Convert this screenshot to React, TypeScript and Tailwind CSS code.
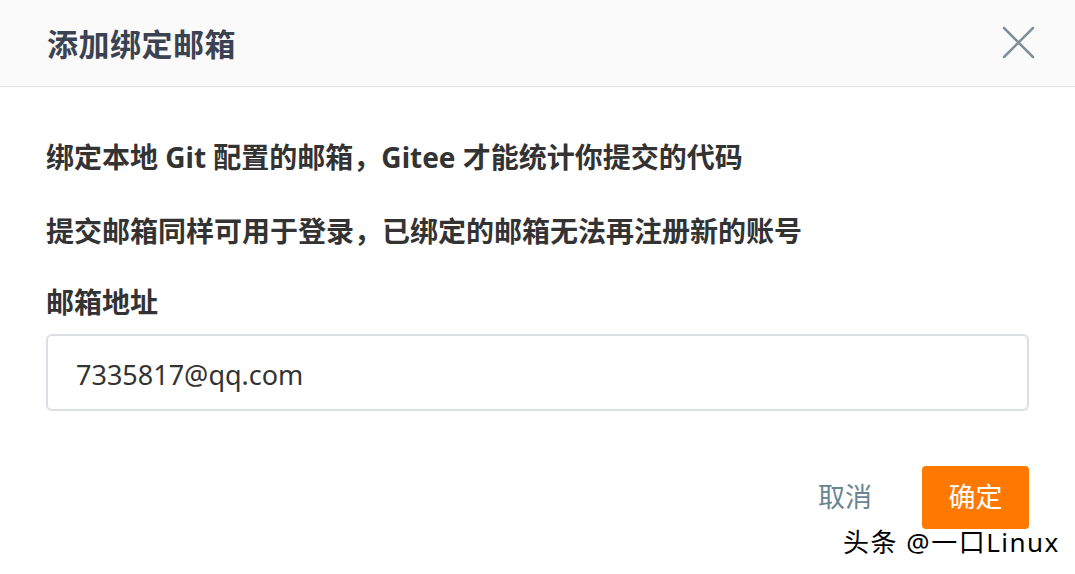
const font = { fontFamily: '"Noto Sans", "Noto Sans CJK SC", sans-serif' }

export default function App() {
  return (
    <div className="w-[1075px] h-[574px] bg-white overflow-hidden relative" style={font}>
      <div className="h-[87px] bg-[#fafafa] border-b border-[#e3e3e3] flex items-center justify-between pl-[47px] pr-[38px]">
        <h1 className="text-[31px] font-bold text-[#3b4252] leading-[40px] pt-[2px] tracking-[0.5px]">添加绑定邮箱</h1>
        <svg width="36" height="36" viewBox="0 0 36 36" className="text-[#7f9099]">
          <path d="M3 3 L32 32 M32 3 L3 32" stroke="currentColor" strokeWidth="2.5" strokeLinecap="round" />
        </svg>
      </div>

      <div className="px-[46px] pt-[52px] text-[#333333]">
        <p className="text-[28px] font-bold leading-[36px]">绑定本地 Git 配置的邮箱，Gitee 才能统计你提交的代码</p>
        <p className="text-[28px] font-bold leading-[36px] mt-[38px]">提交邮箱同样可用于登录，已绑定的邮箱无法再注册新的账号</p>
        <label className="block text-[28px] font-bold leading-[36px] mt-[35px]">邮箱地址</label>
        <div className="mt-[14px] h-[77px] border-2 border-[#dcdfe6] rounded-[6px] flex items-center pl-[28px] pt-[6px]">
          <span className="text-[27px] text-[#333333]">7335817@qq.com</span>
        </div>

        <div className="flex justify-end items-center mt-[55px] gap-[50px]">
          <button className="text-[27px] text-[#6a8592]">取消</button>
          <button className="w-[107px] h-[63px] bg-[#ff7800] text-white text-[27px] rounded-[4px]">确定</button>
        </div>
      </div>

      <div
        className="absolute left-[843px] top-[523px] text-[26px] tracking-[1.5px] text-black"
        style={{ textShadow: "0 0 2px #fff, 0 0 2px #fff" }}
      >
        头条 @一口Linux
      </div>
    </div>
  )
}
